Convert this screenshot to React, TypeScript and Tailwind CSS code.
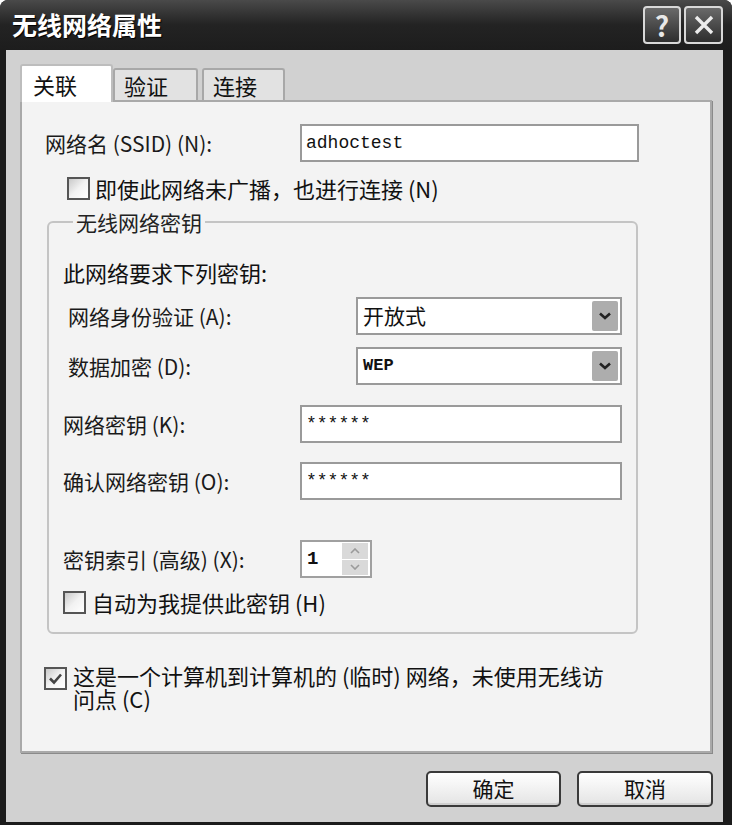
import type { ReactNode } from 'react';

const cjk = { fontFamily: '"Noto Sans CJK SC", "Noto Sans", sans-serif' };
const mono = { fontFamily: '"Liberation Mono", "Noto Sans CJK SC", monospace' };

function CheckBox({ checked = false }: { checked?: boolean }) {
  return (
    <span className="flex h-[23px] w-[23px] shrink-0 items-center justify-center border-2 border-[#555] bg-gradient-to-br from-[#c9c9c9] via-[#f2f2f2] to-white">
      {checked && (
        <svg width="15" height="13" viewBox="0 0 15 13">
          <path d="M2 6.5 L6 10.5 L13 2.5" fill="none" stroke="#444" strokeWidth="2.6" />
        </svg>
      )}
    </span>
  );
}

function TextBox({ value, width }: { value: string; width: string }) {
  return (
    <div className={`flex h-[38px] items-center border-2 border-[#9a9a9a] bg-white px-[4px] text-[18px] text-[#111] ${width}`} style={mono}>
      {value}
    </div>
  );
}

function Select({ value, latin = false }: { value: string; latin?: boolean }) {
  return (
    <div className="flex h-[38px] w-[266px] items-center justify-between border-2 border-[#9a9a9a] bg-white pl-[5px] pr-[2px]">
      <span className={latin ? 'text-[17px] font-bold text-[#111]' : 'text-[21px] text-[#111]'} style={latin ? mono : cjk}>
        {value}
      </span>
      <span className="flex h-[30px] w-[26px] items-center justify-center rounded-[2px] bg-[#adadad]">
        <svg width="14" height="10" viewBox="0 0 14 10">
          <path d="M2 2.5 L7 7 L12 2.5" fill="none" stroke="#222" strokeWidth="2.6" />
        </svg>
      </span>
    </div>
  );
}

function Row({ label, labelW, children, mt }: { label: string; labelW: string; children: ReactNode; mt: string }) {
  return (
    <div className={`flex items-center ${mt}`}>
      <span className={`${labelW} text-[21px] leading-[28px] text-[#1a1a1a]`} style={cjk}>
        {label}
      </span>
      {children}
    </div>
  );
}

export default function App() {
  return (
    <div className="flex h-[825px] w-[732px] flex-col rounded-t-[8px] bg-[#1b1b1b]" style={cjk}>
      {/* title bar */}
      <div className="flex h-[50px] items-center justify-between rounded-t-[8px] bg-gradient-to-b from-[#4a4a4a] via-[#232323] to-[#1d1d1d] pl-[12px] pr-[9px]">
        <span className="text-[25px] font-bold text-white [text-shadow:1px_1px_1px_#000]">无线网络属性</span>
        <div className="flex gap-[3px]">
          <span className="flex h-[38px] w-[38px] items-center justify-center rounded-[4px] border-2 border-[#d8d8d8] bg-gradient-to-b from-[#6a6a6a] to-[#2e2e2e] text-[28px] font-bold leading-none text-[#e8e8e8]">
            ?
          </span>
          <span className="flex h-[38px] w-[39px] items-center justify-center rounded-[4px] border-2 border-[#d8d8d8] bg-gradient-to-b from-[#6a6a6a] to-[#2e2e2e]">
            <svg width="22" height="22" viewBox="0 0 22 22">
              <path d="M3 3 L19 19 M19 3 L3 19" stroke="#ececec" strokeWidth="3.4" />
            </svg>
          </span>
        </div>
      </div>

      {/* body */}
      <div className="ml-[6px] mr-[9px] mb-[3px] flex flex-1 flex-col bg-[#d1d1d1] pl-[14px]">
        {/* tabs */}
        <div className="mt-[14px] flex h-[36px] items-end">
          <div className="relative z-10 -mb-[2px] flex h-[38px] w-[93px] items-center rounded-t-[3px] border-x-2 border-t-2 border-[#bdbdbd] bg-white pl-[11px] text-[22px] text-[#111]">
            关联
          </div>
          <div className="flex h-[32px] w-[85px] items-center rounded-t-[3px] border-x-2 border-t-2 border-[#a8a8a8] bg-[#e2e2e2] pl-[9px] text-[22px] text-[#111]">
            验证
          </div>
          <div className="ml-[4px] flex h-[32px] w-[83px] items-center rounded-t-[3px] border-x-2 border-t-2 border-[#a8a8a8] bg-[#e2e2e2] pl-[9px] text-[22px] text-[#111]">
            连接
          </div>
        </div>

        {/* panel */}
        <div className="flex h-[653px] w-[692px] flex-col border-2 border-[#a9a9a9] bg-[#f3f3f3] pl-[23px] shadow-[1px_1px_0_#8a8a8a]">
          <Row label="网络名 (SSID) (N):" labelW="w-[255px]" mt="mt-[22px]">
            <TextBox value="adhoctest" width="w-[339px]" />
          </Row>

          <div className="ml-[22px] mt-[11px] flex items-center gap-[5px]">
            <CheckBox />
            <span className="text-[22px] leading-[30px] text-[#111]">即使此网络未广播，也进行连接 (N)</span>
          </div>

          <fieldset className="ml-[2px] mt-[5px] w-[591px] rounded-[6px] border-2 border-[#c4c4c4] pb-[15px] pl-[14px]">
            <legend className="ml-[10px] px-[3px] text-[21px] leading-[28px] text-[#222]">无线网络密钥</legend>
            <div className="mt-[22px] text-[22px] leading-[28px] text-[#111]">此网络要求下列密钥:</div>

            <div className="pl-[5px]">
              <Row label="网络身份验证 (A):" labelW="w-[288px]" mt="mt-[11px]">
                <Select value="开放式" />
              </Row>
              <Row label="数据加密 (D):" labelW="w-[288px]" mt="mt-[12px]">
                <Select value="WEP" latin />
              </Row>
            </div>

            <Row label="网络密钥 (K):" labelW="w-[237px]" mt="mt-[20px]">
              <TextBox value="******" width="w-[322px]" />
            </Row>
            <Row label="确认网络密钥 (O):" labelW="w-[237px]" mt="mt-[19px]">
              <TextBox value="******" width="w-[322px]" />
            </Row>

            <Row label="密钥索引 (高级) (X):" labelW="w-[237px]" mt="mt-[40px]">
              <div className="flex h-[38px] w-[72px] items-center justify-between border-2 border-[#a0a0a0] bg-white pl-[5px] pr-[2px]">
                <span className="text-[19px] font-bold text-[#111]" style={mono}>
                  1
                </span>
                <div className="flex h-[32px] w-[26px] flex-col gap-[1px]">
                  <span className="flex flex-1 items-center justify-center bg-[#d9d9d9]">
                    <svg width="10" height="6" viewBox="0 0 10 6">
                      <path d="M1 5 L5 1 L9 5" fill="none" stroke="#9a9a9a" strokeWidth="1.6" />
                    </svg>
                  </span>
                  <span className="flex flex-1 items-center justify-center bg-[#d9d9d9]">
                    <svg width="10" height="6" viewBox="0 0 10 6">
                      <path d="M1 1 L5 5 L9 1" fill="none" stroke="#9a9a9a" strokeWidth="1.6" />
                    </svg>
                  </span>
                </div>
              </div>
            </Row>

            <div className="mt-[9px] flex items-center gap-[6px]">
              <CheckBox />
              <span className="text-[22px] leading-[30px] text-[#111]">自动为我提供此密钥 (H)</span>
            </div>
          </fieldset>

          <div className="-ml-[1px] mt-[30px] flex items-start gap-[6px]">
            <span className="mt-[3px]">
              <CheckBox checked />
            </span>
            <span className="w-[548px] text-[22px] leading-[23px] text-[#111]">
              这是一个计算机到计算机的 (临时) 网络，未使用无线访问点 (C)
            </span>
          </div>
        </div>

        {/* buttons */}
        <div className="mt-[18px] flex w-[693px] justify-end gap-[16px]">
          <button className="h-[36px] w-[135px] rounded-[5px] border-2 border-[#3a3a3a] bg-gradient-to-b from-white to-[#e4e4e4] text-[21px] text-[#111] shadow-[inset_0_-2px_0_#cfcfcf]">
            确定
          </button>
          <button className="h-[36px] w-[136px] rounded-[5px] border-2 border-[#3a3a3a] bg-gradient-to-b from-white to-[#e4e4e4] text-[21px] text-[#111] shadow-[inset_0_-2px_0_#cfcfcf]">
            取消
          </button>
        </div>
      </div>
    </div>
  );
}
